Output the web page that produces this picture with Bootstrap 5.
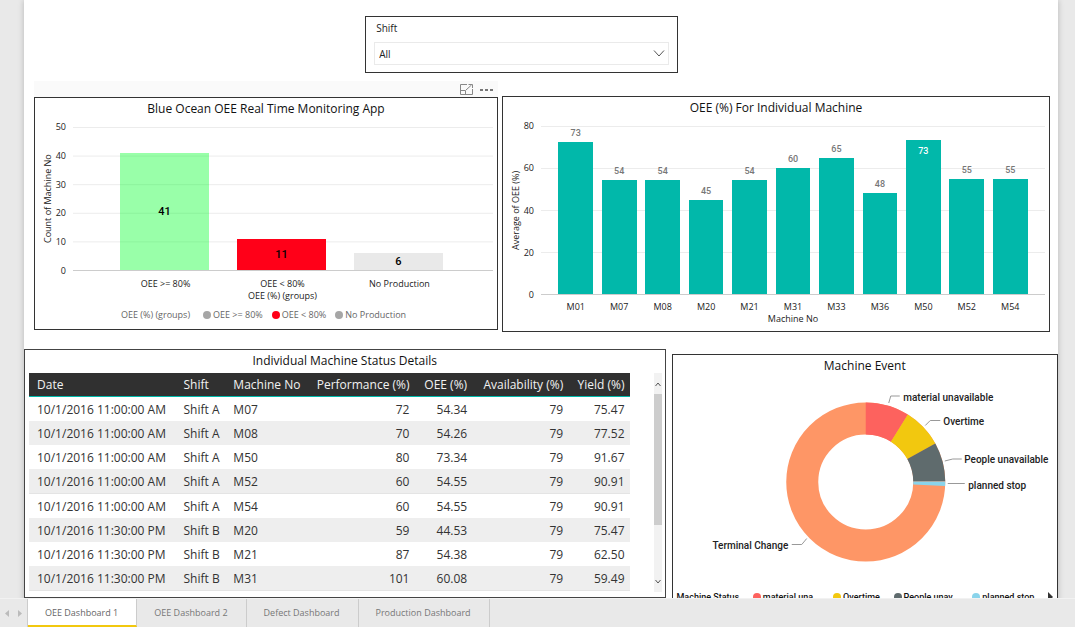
<!DOCTYPE html>
<html lang="en">
<head>
<meta charset="utf-8">
<meta name="viewport" content="width=device-width, initial-scale=1">
<title>OEE Dashboard 1</title>
<link href="https://cdn.jsdelivr.net/npm/bootstrap@5.3.0/dist/css/bootstrap.min.css" rel="stylesheet">
<style>
  body { font-family: "Open Sans", "Noto Sans", sans-serif; background: #e9e9e9; color: #222; font-size: 9px; line-height: 12px; }
  .stage { min-height: 0; }
  .report { margin: 0 17px 0 24px; padding-top: 16px; background: #fff; box-shadow: 0 0 6px rgba(0,0,0,.22); min-height: 100%; }
  .tile { border: 1px solid #333; background: #fff; min-width: 0; }
  .tile-title { font-size: 12px; line-height: 19px; padding-top: 1px; font-weight: 400; color: #111; text-align: center; margin: 0; }

  .slicer { width: 313px; height: 57px; margin-left: 33%; padding: 5px 8px 8px; }
  .slicer label { font-size: 10px; padding-left: 2px; }
  .slicer select { appearance: none; height: 23px; border: 1px solid #eaeaea; background: #fff; font-size: 10px; line-height: 14px; color: #222; padding: 2px 4px; }
  .slicer svg { right: 4px; top: 7px; pointer-events: none; }

  .charts { padding: 8px 8px 0 10px; gap: 4px; }
  .groups-col { flex: 464 1 0; min-width: 0; }
  .machine-col { flex: 548 1 0; min-width: 0; margin-top: 15px; }
  .tile-tools { height: 16px; background: #fafafa; padding: 0 4px; gap: 6px; }
  .tile-tools button { border: 0; background: none; padding: 0; line-height: 0; }

  .plot-grid { display: grid; grid-template-columns: 14px 11px 1fr; padding: 3px 4px 0 6px; }
  .y-name { writing-mode: vertical-rl; transform: rotate(180deg); text-align: center; justify-self: center; line-height: 12px; }
  .ticks { display: flex; flex-direction: column; justify-content: space-between; text-align: right; }
  .plot { display: flex; margin: 6px 0 6px 7px; border-bottom: 1px solid #ccc; }
  .slot { flex: 1 1 0; display: flex; flex-direction: column; justify-content: flex-end; align-items: center; height: 100%; }
  .bar { flex-shrink: 0; text-align: center; }
  .x-names { display: flex; grid-column: 3; margin-left: 7px; text-align: center; }
  .x-names span { flex: 1 1 0; white-space: nowrap; }

  .groups .plot { height: 144px; padding: 0 36px 0 33px; background: linear-gradient(#ececec 1px, transparent 1px) 0 0 / 100% 20%; }
  .groups .bar { width: 76%; display: flex; align-items: center; justify-content: center; color: #000; font: 500 11px/12px Roboto, sans-serif; padding-top: 2px; }
  .groups .x-names { padding: 1px 35px 0 34px; }
  .g-high { background: rgba(0,255,40,.4); }
  .g-low { background: #ff0018; }
  .g-none { background: #e9e9e9; }
  .groups { height: 233px; }
  .key-row { color: #666; gap: 9px; margin: 7px 0 0 86px; white-space: nowrap; }
  .key-item { display: flex; align-items: center; gap: 2px; }
  .dot { width: 8px; height: 8px; border-radius: 50%; display: inline-block; flex-shrink: 0; }
  .dot-grey { background: #a6a6a6; } .dot-red { background: #ff0018; }

  .machines { height: 236px; }
  .machines .plot { height: 169px; padding: 0 13px; background: linear-gradient(#ececec 1px, transparent 1px) 0 0 / 100% 25%; }
  .machines .bar { width: 80%; background: #01b8aa; color: #fff; font: 500 9px/12px Roboto, sans-serif; padding-top: 5px; }
  .machines .val { color: #777; font: 500 9px/12px Roboto, sans-serif; margin-bottom: 3px; }
  .machines .x-names { padding: 0 13px; }

  .details { padding-top: 17px; gap: 6px; }
  .status-tile { flex: 642 1 0; height: 249px; border-color: #444; }
  .event-tile { flex: 386 1 0; margin-top: 5px; height: 260px; }
  .status-body { padding: 3px 3px 0 4px; gap: 24px; }
  .status-table { width: 100%; table-layout: fixed; border-collapse: separate; border-spacing: 0; font-size: 12px; line-height: 16px; color: #333; }
  .status-table th { background: #303030; color: #f2f2f2; font-weight: 400; border-bottom: 1px solid #01b8aa; }
  .status-table th, .status-table td { height: 24px; padding: 0 5px 0 8px; white-space: nowrap; }
  .status-table td { padding-top: 1px; }
  .status-table tbody tr:nth-child(even) { background: #eee; }
  .status-table tbody tr:nth-child(4n) td { border-bottom: 1px solid #e4e4e4; height: 25px; }
  .status-table .num { text-align: right; padding-left: 0; }
  .scroller { width: 8px; flex-shrink: 0; background: #f2f2f2; height: 219px; display: flex; flex-direction: column; }
  .scroller button { border: 0; background: none; padding: 0; height: 21px; line-height: 0; }
  .thumb { height: 131px; background: #cdcdcd; }

  .donut { display: block; width: 100%; height: 216px; font: 500 10px Roboto, sans-serif; }
  .event-key { font: 500 9px/12px Roboto, sans-serif; color: #111; padding: 0 4px; white-space: nowrap; }

  .tabs { height: 29px; flex-shrink: 0; background: #e9e9e9; border-top: 1px solid #f2f2f2; }
  .pager { width: 28px; border-right: 1px solid #ccc; }
  .pager button { border: 0; background: none; padding: 0; line-height: 0; }
  .tabs a { font-size: 9px; line-height: 28px; font-weight: 500; color: #777; text-decoration: none; padding: 0 18px 0 17px; border-right: 1px solid #ccc; }
  .tabs a.active { background: #fff; border-bottom: 2px solid #f2c80f; color: #666; }
</style>
</head>
<body class="vh-100 d-flex flex-column overflow-hidden">
<main class="stage flex-grow-1 overflow-hidden">
  <div class="report">
    <section class="slicer tile">
      <label for="shift" class="d-block mb-1">Shift</label>
      <div class="position-relative mt-2">
        <select id="shift" class="w-100"><option>All</option></select>
        <svg class="position-absolute" width="12" height="9" viewBox="0 0 12 9" fill="none" stroke="#555"><path d="M1 1.5 6 7l5-5.500"/></svg>
      </div>
    </section>

    <div class="charts d-flex align-items-start">
      <div class="groups-col">
        <div class="tile-tools d-flex justify-content-end align-items-center">
          <button aria-label="Focus mode"><svg width="13" height="11" viewBox="0 0 13 11" fill="none" stroke="#888"><path d="M7 .5H.5v10h12V5M.5 6.500h5v4M6 6l5.500-5M8.500.5h4v3.500" /></svg></button>
          <button aria-label="More options"><svg width="15" height="11" viewBox="0 0 15 11" fill="#777"><path d="M1 5h3v2H1zM6 5h3v2H6zM11 5h3v2h-3z"/></svg></button>
        </div>
        <section class="tile groups">
          <h2 class="tile-title">Blue Ocean OEE Real Time Monitoring App</h2>
          <div class="plot-grid">
            <div class="y-name">Count of Machine No</div>
            <div class="ticks"><span>50</span><span>40</span><span>30</span><span>20</span><span>10</span><span>0</span></div>
            <div class="plot">
              <div class="slot"><div class="bar g-high" style="height:82%">41</div></div>
              <div class="slot"><div class="bar g-low" style="height:22%">11</div></div>
              <div class="slot"><div class="bar g-none" style="height:12%">6</div></div>
            </div>
            <div class="x-names"><span>OEE &gt;= 80%</span><span>OEE &lt; 80%<br>OEE (%) (groups)</span><span>No Production</span></div>
          </div>
          <div class="key-row d-flex">
            <span class="me-1">OEE (%) (groups)</span>
            <span class="key-item"><i class="dot dot-grey"></i>OEE &gt;= 80%</span>
            <span class="key-item"><i class="dot dot-red"></i>OEE &lt; 80%</span>
            <span class="key-item"><i class="dot dot-grey"></i>No Production</span>
          </div>
        </section>
      </div>

      <div class="machine-col">
        <section class="tile machines">
          <h2 class="tile-title">OEE (%) For Individual Machine</h2>
          <div class="plot-grid">
            <div class="y-name">Average of OEE (%)</div>
            <div class="ticks"><span>80</span><span>60</span><span>40</span><span>20</span><span>0</span></div>
            <div class="plot">
              <div class="slot"><span class="val">73</span><div class="bar" style="height:90.6%"></div></div>
              <div class="slot"><span class="val">54</span><div class="bar" style="height:67.9%"></div></div>
              <div class="slot"><span class="val">54</span><div class="bar" style="height:67.8%"></div></div>
              <div class="slot"><span class="val">45</span><div class="bar" style="height:55.7%"></div></div>
              <div class="slot"><span class="val">54</span><div class="bar" style="height:68%"></div></div>
              <div class="slot"><span class="val">60</span><div class="bar" style="height:75.1%"></div></div>
              <div class="slot"><span class="val">65</span><div class="bar" style="height:80.9%"></div></div>
              <div class="slot"><span class="val">48</span><div class="bar" style="height:60%"></div></div>
              <div class="slot"><div class="bar" style="height:91.7%">73</div></div>
              <div class="slot"><span class="val">55</span><div class="bar" style="height:68.2%"></div></div>
              <div class="slot"><span class="val">55</span><div class="bar" style="height:68.2%"></div></div>
            </div>
            <div class="x-names"><span>M01</span><span>M07</span><span>M08</span><span>M20</span><span>M21</span><span>M31</span><span>M33</span><span>M36</span><span>M50</span><span>M52</span><span>M54</span></div>
            <div class="x-names"><span>Machine No</span></div>
          </div>
        </section>
      </div>
    </div>

    <div class="details d-flex align-items-start">
      <section class="tile status-tile">
        <h2 class="tile-title">Individual Machine Status Details</h2>
        <div class="status-body d-flex">
          <div class="flex-grow-1">
            <table class="status-table">
              <colgroup><col style="width:24.4%"><col style="width:8.3%"><col style="width:13.6%"><col style="width:17.9%"><col style="width:9.6%"><col style="width:16%"><col style="width:10.2%"></colgroup>
              <thead><tr><th>Date</th><th>Shift</th><th>Machine No</th><th class="num">Performance (%)</th><th class="num">OEE (%)</th><th class="num">Availability (%)</th><th class="num">Yield (%)</th></tr></thead>
              <tbody>
                <tr><td>10/1/2016 11:00:00 AM</td><td>Shift A</td><td>M07</td><td class="num">72</td><td class="num">54.34</td><td class="num">79</td><td class="num">75.47</td></tr>
                <tr><td>10/1/2016 11:00:00 AM</td><td>Shift A</td><td>M08</td><td class="num">70</td><td class="num">54.26</td><td class="num">79</td><td class="num">77.52</td></tr>
                <tr><td>10/1/2016 11:00:00 AM</td><td>Shift A</td><td>M50</td><td class="num">80</td><td class="num">73.34</td><td class="num">79</td><td class="num">91.67</td></tr>
                <tr><td>10/1/2016 11:00:00 AM</td><td>Shift A</td><td>M52</td><td class="num">60</td><td class="num">54.55</td><td class="num">79</td><td class="num">90.91</td></tr>
                <tr><td>10/1/2016 11:00:00 AM</td><td>Shift A</td><td>M54</td><td class="num">60</td><td class="num">54.55</td><td class="num">79</td><td class="num">90.91</td></tr>
                <tr><td>10/1/2016 11:30:00 PM</td><td>Shift B</td><td>M20</td><td class="num">59</td><td class="num">44.53</td><td class="num">79</td><td class="num">75.47</td></tr>
                <tr><td>10/1/2016 11:30:00 PM</td><td>Shift B</td><td>M21</td><td class="num">87</td><td class="num">54.38</td><td class="num">79</td><td class="num">62.50</td></tr>
                <tr><td>10/1/2016 11:30:00 PM</td><td>Shift B</td><td>M31</td><td class="num">101</td><td class="num">60.08</td><td class="num">79</td><td class="num">59.49</td></tr>
              </tbody>
            </table>
          </div>
          <div class="scroller">
            <button aria-label="Scroll up"><svg width="8" height="6" viewBox="0 0 8 6" fill="none" stroke="#555"><path d="m1.500 5 2.500-3 2.500 3"/></svg></button>
            <div class="thumb"></div>
            <button class="mt-auto" aria-label="Scroll down"><svg width="8" height="6" viewBox="0 0 8 6" fill="none" stroke="#555"><path d="m1.500 1 2.500 3 2.500-3"/></svg></button>
          </div>
        </div>
      </section>

      <section class="tile event-tile">
        <h2 class="tile-title">Machine Event</h2>
        <svg class="donut" viewBox="0 0 384 216" role="img" aria-label="Machine events by status">
          <g transform="translate(192.500 107)" fill="none" stroke-width="32">
            <circle r="63.500" stroke="#fe9666"/>
            <g transform="rotate(-90)">
              <circle r="63.500" stroke="#fd625e" pathLength="360" stroke-dasharray="32 328"/>
              <circle r="63.500" stroke="#f2c80f" pathLength="360" stroke-dasharray="29 331" stroke-dashoffset="-32"/>
              <circle r="63.500" stroke="#5f6b6d" pathLength="360" stroke-dasharray="28.500 331.500" stroke-dashoffset="-61"/>
              <circle r="63.500" stroke="#8ad4eb" pathLength="360" stroke-dasharray="3.500 356.500" stroke-dashoffset="-89.500"/>
            </g>
          </g>
          <g fill="none" stroke="#999"><path d="M215.500 28l2-7h9M252 50.500l5-5h10M271.500 86l8-2h9M274.500 108.500h17M118.500 169.500h10l5-6"/></g>
          <g fill="#222">
            <text x="230" y="26">material unavailable</text>
            <text x="270" y="50">Overtime</text>
            <text x="291" y="88">People unavailable</text>
            <text x="295" y="114">planned stop</text>
            <text x="115" y="174" text-anchor="end">Terminal Change</text>
          </g>
        </svg>
        <div class="event-key d-flex align-items-center justify-content-between">
          <span>Machine Status</span>
          <span class="key-item"><i class="dot" style="background:#fd625e"></i>material una…</span>
          <span class="key-item"><i class="dot" style="background:#f2c80f"></i>Overtime</span>
          <span class="key-item"><i class="dot" style="background:#5f6b6d"></i>People unav…</span>
          <span class="key-item"><i class="dot" style="background:#8ad4eb"></i>planned stop</span>
          <svg width="5" height="10" viewBox="0 0 5 10"><path d="M0 0v10l5-5z" fill="#333"/></svg>
        </div>
      </section>
    </div>
  </div>
</main>

<nav class="tabs d-flex" aria-label="Report pages">
  <div class="pager d-flex align-items-center justify-content-around">
    <button aria-label="Previous page"><svg width="4" height="7" viewBox="0 0 4 7"><path d="M4 0v7L0 3.500z" fill="#bbb"/></svg></button>
    <button aria-label="Next page"><svg width="4" height="7" viewBox="0 0 4 7"><path d="M0 0v7l4-3.500z" fill="#bbb"/></svg></button>
  </div>
  <a href="#" class="active" aria-current="page">OEE Dashboard 1</a>
  <a href="#">OEE Dashboard 2</a>
  <a href="#">Defect Dashboard</a>
  <a href="#">Production Dashboard</a>
</nav>
<script src="https://cdn.jsdelivr.net/npm/bootstrap@5.3.0/dist/js/bootstrap.bundle.min.js"></script>
</body>
</html>
